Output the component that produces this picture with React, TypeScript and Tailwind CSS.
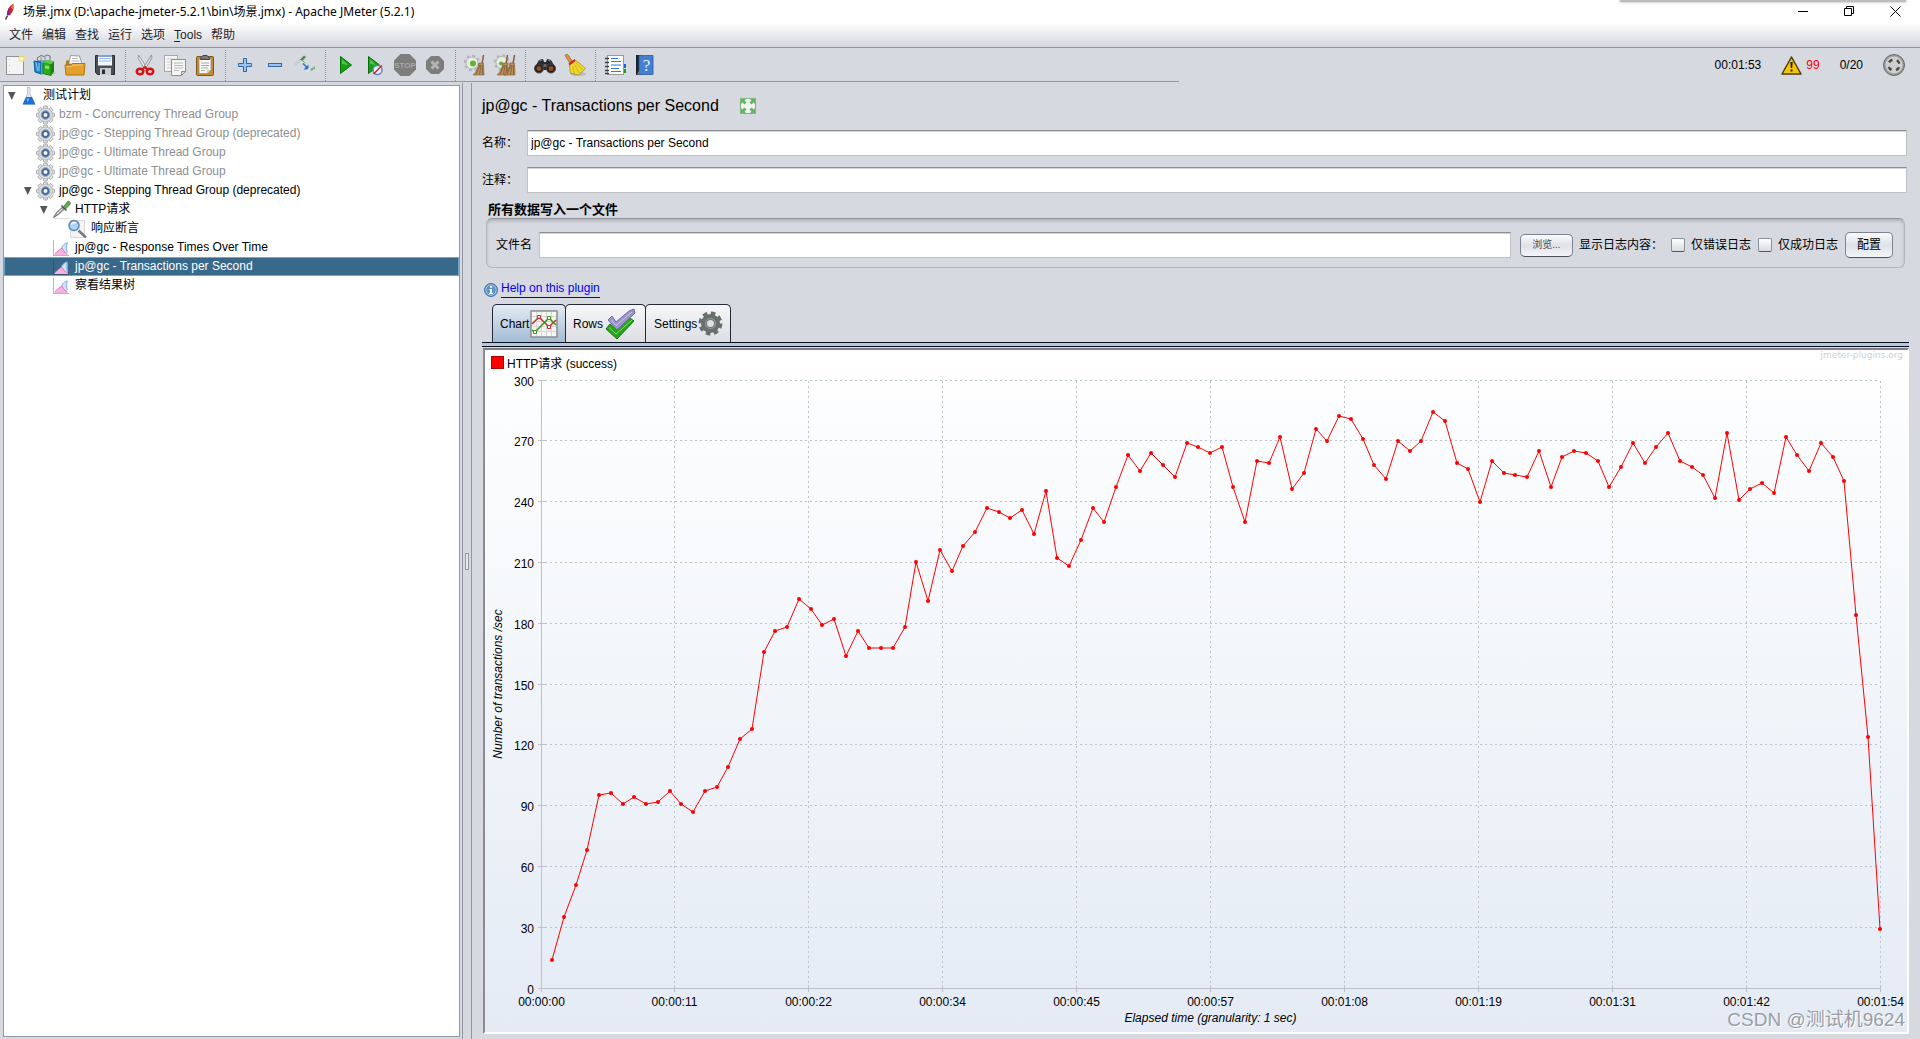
import { useLayoutEffect, useRef, useState } from 'react';
import type { ReactNode } from 'react';
import clsx from 'clsx';

/* ---------- toolbar icons (24x24) ---------- */

function Svg({ children, size = 24 }: { children: ReactNode; size?: number }) {
  return (
    <svg width={size} height={size} viewBox="0 0 24 24" fill="none" aria-hidden="true" className="block shrink-0">
      {children}
    </svg>
  );
}

const NewIcon = () => (
  <Svg>
    <rect x="3.500" y="3.500" width="17" height="18" fill="#f4f4f4" stroke="#8f9290" />
    <path d="M6.500 6v13" stroke="#c3c3c3" strokeDasharray="1 5" />
    <circle cx="19" cy="5.500" r="3.500" fill="#f6e27a" opacity=".8" />
    <circle cx="19" cy="5.500" r="1.500" fill="#fffbe0" />
  </Svg>
);

const TemplatesIcon = () => (
  <Svg>
    <path d="M4 5l4-2.500 3 1 3-1.500 3 1v5H5z" fill="#d7dadd" stroke="#6f7679" />
    <path d="M8 4v5M12 3.500v5" stroke="#8a9194" />
    <path d="M1 8l7 1v12l-6-2z" fill="#1b87c9" stroke="#0f6095" />
    <path d="M3 9.500l1.500 8M6 10v8" stroke="#8fd0f2" />
    <path d="M8 9l4-2v13l-4 2z" fill="#3ba5df" />
    <path d="M10 10l8 1v11.500l-8-2z" fill="#2fae1b" stroke="#1c7c0d" />
    <path d="M18 11l3-3v11l-3 3.500z" fill="#17850b" />
    <path d="M12 12.500l4 .5v3l-4-.5z" fill="#8be077" />
    <path d="M10 10l4-3 7 1-3 3z" fill="#59cc42" />
    <path d="M21 20l3-1-4 3z" fill="#999" opacity=".6" />
  </Svg>
);

const OpenIcon = () => (
  <Svg>
    <path d="M3 10V7.500h5L10 10h11v11H3z" fill="#b2781a" />
    <path d="M6 10l1.500-7.500 9 .5 2.500 8H6z" fill="#fafafa" stroke="#9a9a9a" />
    <path d="M9 5.500h6M8.500 8h8" stroke="#b5b5b5" />
    <path d="M2 12h6l1.500-1.500H22L21 22H3z" fill="#e2a02c" stroke="#b0740f" />
    <path d="M3.500 13.500h5l1.500-1.500h10" stroke="#f4c872" />
  </Svg>
);

const SaveIcon = () => (
  <Svg>
    <path d="M2.500 2.500h19v19h-17l-2-2z" fill="#4a4d52" stroke="#2a2b2e" />
    <rect x="5" y="2.500" width="14" height="10" fill="#f3f6fa" />
    <path d="M6 5.500h12M6 8h12" stroke="#9db9d8" />
    <path d="M5 3h14" stroke="#7da5d0" strokeWidth="2" />
    <rect x="7" y="15" width="11" height="7" fill="#c9cbce" />
    <rect x="9" y="16.500" width="3" height="4.500" fill="#2c2d30" />
  </Svg>
);

const CutIcon = () => (
  <Svg>
    <path d="M5.500 2L15 16.500l-2.500 1L5 5z" fill="#eceeee" stroke="#7f8486" strokeWidth=".8" />
    <path d="M18.500 2L9 16.500l2.500 1L19 5z" fill="#dde0e0" stroke="#7f8486" strokeWidth=".8" />
    <ellipse cx="7" cy="18.500" rx="3.200" ry="2.800" stroke="#d21414" strokeWidth="2.600" />
    <ellipse cx="17" cy="18.500" rx="3.200" ry="2.800" stroke="#d21414" strokeWidth="2.600" />
    <path d="M9 16.500l3-2.500 3 2.500" stroke="#d21414" strokeWidth="2" />
  </Svg>
);

const CopyIcon = () => (
  <Svg>
    <rect x="1.500" y="2.500" width="13" height="16" fill="#f4f4f4" stroke="#a5a7a8" />
    <path d="M4 6h8M4 9h4M4 12h4M4 15h4" stroke="#cdcdcd" />
    <path d="M8.500 6.500h14v12l-4 4h-10z" fill="#f6f6f6" stroke="#8c8f90" />
    <path d="M11 10h9M11 12.500h9M11 15h9M11 17.500h5" stroke="#b9b9b9" />
    <path d="M22.500 18.500h-4v4z" fill="#ddd" stroke="#8c8f90" />
  </Svg>
);

const PasteIcon = () => (
  <Svg>
    <rect x="3.500" y="3.500" width="17" height="19" rx="1" fill="#c48a2b" stroke="#83560f" />
    <path d="M6 5.500h12v11l-4 4H6z" fill="#fafafa" stroke="#8d8d8d" strokeWidth=".8" />
    <path d="M8 10h8M8 12.500h8M8 15h7M8 17.500h4" stroke="#a9a9a9" />
    <path d="M18 16.500h-4v4z" fill="#cfcfcf" />
    <path d="M7.500 6.500c0-3 2-3 2.500-4h4c.5 1 2.500 1 2.500 4z" fill="#77797a" stroke="#444" />
  </Svg>
);

const PlusIcon = () => (
  <Svg>
    <path d="M10.500 5.500h3v5h5v3h-5v5h-3v-5h-5v-3h5z" fill="#9dc3ee" stroke="#3465a4" />
  </Svg>
);

const MinusIcon = () => (
  <Svg>
    <rect x="5.500" y="10.500" width="13" height="3" fill="#9dc3ee" stroke="#3465a4" />
  </Svg>
);

const ToggleIcon = () => (
  <Svg>
    <path d="M2 12l6-6" stroke="#c9cdd0" strokeWidth="2.500" />
    <path d="M7 6.500l4-4 2 1.500-3.500 4z" fill="#4f8f4a" />
    <path d="M10 8l2 2" stroke="#8aa389" />
    <path d="M10 10.500l4 4" stroke="#2b6fd0" strokeWidth="1.500" />
    <path d="M15.500 16.500v-5l-5 5z" fill="#2b6fd0" />
    <path d="M13 19l4-3" stroke="#dfe3e6" strokeWidth="2.500" />
    <path d="M17 16.500l5-3.500v3l-4 2z" fill="#7bb376" />
  </Svg>
);

const PlayIcon = () => (
  <Svg>
    <path d="M7.500 3.500v17l11-8.500z" fill="#15a015" stroke="#0a6f0a" />
    <path d="M9 6v5l6 1z" fill="#67d467" opacity=".7" />
  </Svg>
);

const PlayNoTimersIcon = () => (
  <Svg>
    <path d="M5.500 3.500v17l11-8.500z" fill="#15a015" stroke="#0a6f0a" />
    <path d="M7 6v5l6 1z" fill="#67d467" opacity=".7" />
    <circle cx="14.500" cy="17" r="4.500" fill="#e7eefa" stroke="#5b86c4" strokeWidth="1.500" />
    <path d="M10.500 21l8.500-8.500" stroke="#d62020" strokeWidth="1.500" />
  </Svg>
);

const StopIcon = () => (
  <Svg>
    <path d="M7.500 1h9L23 7.500v9L16.500 23h-9L1 16.500v-9z" fill="#7d7d7d" />
    <text x="12" y="15" textAnchor="middle" fontSize="8" fontWeight="700" fill="#a6a6a6" fontFamily="Liberation Sans">STOP</text>
  </Svg>
);

const ShutdownIcon = () => (
  <Svg>
    <path d="M8 3h8l5 5v8l-5 5H8l-5-5V8z" fill="#7d7d7d" />
    <path d="M8.500 8.500l7 7M15.500 8.500l-7 7" stroke="#b4b4b4" strokeWidth="3" />
  </Svg>
);

const Cog = ({ cx, cy }: { cx: number; cy: number }) => (
  <g>
    <circle cx={cx} cy={cy} r="7" stroke="#b4b7b6" strokeWidth="2.500" strokeDasharray="2.800 2.700" />
    <circle cx={cx} cy={cy} r="6" fill="#e9ebea" stroke="#b4b7b6" />
  </g>
);

const Broom = ({ x }: { x: number }) => (
  <g transform={`translate(${x} 0)`}>
    <path d="M14.500 2L13 11" stroke="#8a5a2a" strokeWidth="1.500" />
    <path d="M10 10h4.500l.5 12H4c3.500-3 5-7 6-12z" fill="#b98f5d" stroke="#7d5a30" strokeWidth=".6" />
    <path d="M11 12l-4 9M12 12l-1.500 9.500M13.500 12v9.500" stroke="#7d5a30" strokeWidth=".8" />
  </g>
);

const ClearIcon = () => (
  <Svg>
    <Cog cx={9} cy={10} />
    <circle cx="10" cy="10.500" r="3" fill="#5cb82a" />
    <Broom x={6} />
  </Svg>
);

const ClearAllIcon = () => (
  <Svg>
    <Cog cx={9} cy={9.5} />
    <circle cx="8" cy="10.500" r="2" fill="#5cb82a" />
    <Broom x={0} />
    <Broom x={7} />
  </Svg>
);

const SearchIcon = () => (
  <Svg>
    <path d="M2 14l4-7 4-1 1 3h2l1-3 4 1 4 7v3H2z" fill="#2b2b2d" />
    <path d="M6.500 8l2-.5M15.500 7.500l2 .5" stroke="#9a9a9a" />
    <circle cx="6" cy="15.500" r="4.500" fill="#1f1f20" stroke="#4b4b4b" />
    <circle cx="18" cy="15.500" r="4.500" fill="#1f1f20" stroke="#4b4b4b" />
    <circle cx="6" cy="15.500" r="2.500" fill="#8d4e22" />
    <circle cx="18" cy="15.500" r="2.500" fill="#8d4e22" />
    <path d="M10.500 11h3v3h-3z" fill="#666" />
  </Svg>
);

const BroomIcon = () => (
  <Svg>
    <ellipse cx="15" cy="21" rx="8" ry="2" fill="#999" opacity=".5" />
    <path d="M2 2.500c1-1.500 3-1 3.500 0L9 8 6.500 9.500z" fill="#d79a3d" stroke="#93631b" strokeWidth=".8" />
    <path d="M6.500 10.500l5-3.500c4 2 7 5 11 8.500l-7 6.500-8-2c-.5-3-1-6-1-9.500z" fill="#f0da2e" stroke="#a88f10" strokeWidth=".8" />
    <path d="M9.500 13l2 7.500M11.500 11.500l5 9M13 10l7 7.500" stroke="#bda51b" strokeWidth=".8" />
    <path d="M5.500 10.500l6-4.500 1 2-6 4.500z" fill="#d62020" />
  </Svg>
);

const FunctionIcon = () => (
  <Svg>
    <rect x="4.500" y="2.500" width="16" height="19" fill="#fff" stroke="#9a9a9a" />
    <path d="M8 5.500h7M8 8.500h10M8 12h10M8 15.500h8M8 18.500h10" stroke="#2f7bdc" strokeWidth="1.200" />
    <path d="M2 5.500h4M2 9.500h4M2 13.500h4M2 17.500h4M2 20.500h4" stroke="#3a3a3a" strokeWidth="1.500" />
    <path d="M21 11h2v4h-2z" fill="#1767d0" />
    <path d="M21 16h2v4h-2z" fill="#17a01a" />
  </Svg>
);

const HelpIcon = () => (
  <Svg>
    <rect x="3" y="2" width="5" height="20" fill="#1f2023" />
    <path d="M6 2.500h14v19H6z" fill="#4480d2" stroke="#285a9f" strokeWidth=".8" />
    <path d="M3.500 21.500L7 17v4.500z" fill="#777" />
    <text x="13.500" y="18" textAnchor="middle" fontSize="17" fill="#e8f1ff" fontFamily="Liberation Serif">?</text>
  </Svg>
);

/* ---------- tree icons ---------- */

const FlaskIcon = () => (
  <svg width="20" height="20" viewBox="0 0 20 20" fill="none" aria-hidden="true">
    <path d="M7 1.500h3M7.500 2v6L3.500 18h11L10 8V2" fill="#e6edf6" stroke="#b4bfcc" />
    <path d="M6 11h6l3.500 7.500h-13z" fill="#1c6fd6" />
    <path d="M6.500 12.500h3l-2 4z" fill="#78b4f5" />
  </svg>
);

const GearIcon = () => (
  <svg width="20" height="20" viewBox="0 0 20 20" fill="none" aria-hidden="true">
    {[0, 45, 90, 135].map((angle) => (
      <rect key={angle} x="7.500" y="1" width="4" height="18" rx="1" fill="#e0e2e1" stroke="#9b9e9d" strokeWidth=".8" transform={`rotate(${angle} 9.500 10)`} />
    ))}
    <circle cx="9.500" cy="10" r="6.800" fill="#dfe1e0" stroke="#b0b3b2" strokeWidth=".8" />
    <circle cx="9.500" cy="10" r="4.300" fill="#46689c" stroke="#8ba0bf" />
    <circle cx="9.500" cy="10" r="2" fill="#f4f7fb" />
  </svg>
);

const DropperIcon = () => (
  <svg width="20" height="20" viewBox="0 0 20 20" fill="none" aria-hidden="true">
    <path d="M1.500 17.500l3-5 6-5.500 2 2-6 5.500z" fill="#a2a7ab" stroke="#5d6266" strokeWidth=".8" />
    <path d="M5 14l5-5" stroke="#f2f4f5" />
    <path d="M9.500 5.500l5 5" stroke="#4a4f4a" strokeWidth="1.500" />
    <path d="M11.500 7l3.500-5c1.500-1.800 4.500 0 3 2.500L13.500 9z" fill="#6ba457" stroke="#437a34" strokeWidth=".8" />
    <path d="M2 18.500h15" stroke="#ddd" />
  </svg>
);

const MagnifierIcon = () => (
  <svg width="20" height="20" viewBox="0 0 20 20" fill="none" aria-hidden="true">
    <rect x="2.500" y="1.500" width="14" height="17" fill="#f4f4f4" stroke="#d8d8d8" />
    <path d="M10.500 11.500l7.500 7" stroke="#77797b" strokeWidth="2.500" />
    <circle cx="6" cy="6.500" r="5" fill="#a8d4f5" stroke="#5c86b2" strokeWidth="1.500" />
    <path d="M3.500 5.500c1-2 3-2.500 4.500-1.500" stroke="#fff" strokeWidth="1.500" />
  </svg>
);

const GraphIcon = ({ axis = '#b4b7bc' }: { axis?: string }) => (
  <svg width="20" height="20" viewBox="0 0 20 20" fill="none" aria-hidden="true">
    <path d="M1.500 2v16M1 17.500h16" stroke={axis} />
    <path d="M9 10c2-3 3.500-5 6.500-5v12H9z" fill="#d3e3fa" />
    <path d="M9.500 10c1.500-3 3-5 6-5-2 3-1.500 6 0 9" stroke="#7b9fdc" strokeWidth=".8" />
    <path d="M2.500 17v-1L7 12l3-2 2 3.500 3.500 2.500v1z" fill="#f3b5de" />
    <path d="M3 15.500L7 12l3-2 2 3.500 3 2" stroke="#d569b4" strokeWidth=".8" />
  </svg>
);

/* ---------- window ---------- */

function Feather() {
  return (
    <svg width="14" height="18" viewBox="0 0 14 18" aria-hidden="true" className="shrink-0">
      <path d="M3 12c0-5 2-9 6-11 1.500 4 0 8-3.500 11.500z" fill="#c8203f" />
      <path d="M6.500 4c1-2 2-2.500 3-3.500.5 2 .3 4-.5 6z" fill="#e8772e" />
      <path d="M3 12c0-3 1-5 2-7L5 12z" fill="#7b2178" />
      <path d="M1.500 16.500l2-4" stroke="#5c2a4e" strokeWidth="1.500" />
    </svg>
  );
}

function TitleBar() {
  return (
    <header className="relative flex h-[23px] shrink-0 items-center bg-white pl-1">
      <Feather />
      <h1 className="ml-[5px] flex-1 font-['Noto_Sans','Noto_Sans_CJK_SC',sans-serif] text-[12px] leading-4">
        场景.jmx (D:\apache-jmeter-5.2.1\bin\场景.jmx) - Apache JMeter (5.2.1)
      </h1>
      <div className="absolute top-0 right-[14px] h-[2px] w-[286px] bg-[#bdbdbd] shadow-[0_0_3px_#999]" />
      <button type="button" aria-label="最小化" className="flex h-[20px] w-[46px] items-center justify-center">
        <svg width="11" height="11"><path d="M0 5.500h10" stroke="#000" /></svg>
      </button>
      <button type="button" aria-label="还原" className="flex h-[20px] w-[46px] items-center justify-center">
        <svg width="11" height="11" fill="none"><path d="M.5 2.500h7v7h-7zM2.500 2.500v-2h7v7h-2" stroke="#000" /></svg>
      </button>
      <button type="button" aria-label="关闭" className="mr-[2px] flex h-[20px] w-[46px] items-center justify-center">
        <svg width="11" height="11"><path d="M.5.5l10 10M10.500.5l-10 10" stroke="#000" /></svg>
      </button>
    </header>
  );
}

function MenuBar() {
  return (
    <nav className="flex h-[25px] shrink-0 items-center gap-[9px] border-b border-[#9297a1] bg-linear-to-b from-white to-[#d3d6dd] pl-[9px] text-[12px] text-[#23232a]">
      <button type="button">文件</button>
      <button type="button">编辑</button>
      <button type="button">查找</button>
      <button type="button">运行</button>
      <button type="button">选项</button>
      <button type="button"><span className="underline underline-offset-2">T</span>ools</button>
      <button type="button">帮助</button>
    </nav>
  );
}

const toolGroups = [
  [
    { label: '新建', icon: <NewIcon /> },
    { label: '模板', icon: <TemplatesIcon /> },
    { label: '打开', icon: <OpenIcon /> },
    { label: '保存', icon: <SaveIcon /> },
  ],
  [
    { label: '剪切', icon: <CutIcon /> },
    { label: '复制', icon: <CopyIcon /> },
    { label: '粘贴', icon: <PasteIcon /> },
  ],
  [
    { label: '展开', icon: <PlusIcon /> },
    { label: '折叠', icon: <MinusIcon /> },
    { label: '切换', icon: <ToggleIcon /> },
  ],
  [
    { label: '启动', icon: <PlayIcon /> },
    { label: '不停顿启动', icon: <PlayNoTimersIcon /> },
    { label: '停止', icon: <StopIcon /> },
    { label: '关闭线程', icon: <ShutdownIcon /> },
  ],
  [
    { label: '清除', icon: <ClearIcon /> },
    { label: '清除全部', icon: <ClearAllIcon /> },
  ],
  [
    { label: '搜索', icon: <SearchIcon /> },
    { label: '重置搜索', icon: <BroomIcon /> },
  ],
  [
    { label: '函数助手', icon: <FunctionIcon /> },
    { label: '帮助', icon: <HelpIcon /> },
  ],
];

function Toolbar() {
  return (
    <div className="flex h-[34px] shrink-0">
      <div className="flex w-[1179px] border-b border-[#9297a1]">
        {toolGroups.map((group, i) => (
          <div key={i} className="flex">
            {i > 0 && <div className="mt-[2px] ml-[5px] w-[5px] border-l border-dotted border-[#8b8f99]" />}
            {group.map((tool) => (
              <button key={tool.label} type="button" aria-label={tool.label} className="flex w-[30px] items-center justify-center">
                {tool.icon}
              </button>
            ))}
          </div>
        ))}
      </div>
      <div className="flex flex-1 items-center justify-end pr-[14px] text-[12px]">
        <span>00:01:53</span>
        <button type="button" aria-label="日志" className="ml-5 flex items-center gap-1 text-[#ff0000]">
          <svg width="21" height="19" viewBox="0 0 21 19" aria-hidden="true">
            <path d="M10.500 1l9.500 17H1z" fill="#f7c600" stroke="#4b3d05" strokeWidth="1.500" strokeLinejoin="round" />
            <path d="M9.300 6h2.400l-.5 6h-1.400zM9.500 13.500h2v2h-2z" fill="#222" />
          </svg>
          99
        </button>
        <span className="ml-5">0/20</span>
        <svg width="24" height="24" viewBox="0 0 24 24" fill="none" aria-hidden="true" className="ml-[19px]">
          <circle cx="12" cy="12" r="10.500" fill="#9b9b9b" stroke="#6a6a6a" />
          <circle cx="12" cy="12" r="8.500" fill="#cfcfcf" />
          <circle cx="12" cy="12" r="5.500" stroke="#4a4a4a" strokeWidth="2.500" strokeDasharray="4 4.640" strokeDashoffset="-2.320" />
        </svg>
      </div>
    </div>
  );
}

const nodes = [
  { text: '测试计划', icon: <FlaskIcon />, pad: 'pl-1', open: true },
  { text: 'bzm - Concurrency Thread Group', icon: <GearIcon />, pad: 'pl-5', disabled: true },
  { text: 'jp@gc - Stepping Thread Group (deprecated)', icon: <GearIcon />, pad: 'pl-5', disabled: true },
  { text: 'jp@gc - Ultimate Thread Group', icon: <GearIcon />, pad: 'pl-5', disabled: true },
  { text: 'jp@gc - Ultimate Thread Group', icon: <GearIcon />, pad: 'pl-5', disabled: true },
  { text: 'jp@gc - Stepping Thread Group (deprecated)', icon: <GearIcon />, pad: 'pl-5', open: true },
  { text: 'HTTP请求', icon: <DropperIcon />, pad: 'pl-9', open: true },
  { text: '响应断言', icon: <MagnifierIcon />, pad: 'pl-13' },
  { text: 'jp@gc - Response Times Over Time', icon: <GraphIcon />, pad: 'pl-9' },
  { text: 'jp@gc - Transactions per Second', icon: <GraphIcon axis="#35556e" />, pad: 'pl-9', selected: true },
  { text: '察看结果树', icon: <GraphIcon />, pad: 'pl-9' },
];

function Tree() {
  return (
    <ul role="tree" className="mt-[3px] mb-[2px] ml-[3px] w-[457px] shrink-0 border border-[#9297a1] bg-white text-[12px]">
      {nodes.map((node, i) => (
        <li
          key={i}
          role="treeitem"
          aria-selected={!!node.selected}
          className={clsx(
            'flex h-[19px] items-center whitespace-nowrap',
            node.pad,
            node.disabled && 'text-[#8e8f91]',
            node.selected && 'bg-[#39698a] text-white outline outline-[#73a4d1] -outline-offset-1',
          )}
        >
          <span className="w-3 shrink-0">
            {node.open && <svg width="8" height="8"><path d="M0 0h7.500L3.750 8z" fill="#55565b" /></svg>}
          </span>
          <span className="mr-[3px] w-5 shrink-0">{node.icon}</span>
          <span className="pb-px leading-4">{node.text}</span>
        </li>
      ))}
    </ul>
  );
}

/* ---------- form ---------- */

const field =
  'h-[26px] min-w-0 flex-1 border border-[#c0c1c4] border-t-[#8d8e92] bg-white px-[3px] shadow-[inset_0_1px_0_#d4d4d6] outline-none';
const nimbusButton =
  'rounded-[5px] border border-[#7e838d] border-b-[#4c5058] bg-linear-to-b from-[#fbfbfc] via-[#dfe2e6] to-[#f4f5f8] text-center';
const checkbox =
  'size-[14px] appearance-none rounded-[2px] border border-[#8b9099] border-b-[#50555f] bg-linear-to-b from-white to-[#d9dbe2]';

function HeaderForm() {
  return (
    <form className="text-[12px] leading-4">
      <div className="flex h-12 items-center gap-[21px]">
        <h2 className="text-[16px] leading-5">jp@gc - Transactions per Second</h2>
        <button type="button" aria-label="展开面板">
          <svg width="16" height="16" viewBox="0 0 16 16" fill="none" className="block">
            <rect x=".5" y=".5" width="15" height="15" fill="#f1f4f1" stroke="#7fb57f" />
            <path d="M1 1h5L4.500 2.500 6.500 4.500l-2 2L2.500 4.500 1 6zM15 1h-5l1.500 1.500-2 2 2 2 2-2L15 6zM1 15h5l-1.500-1.500 2-2-2-2-2 2L1 10zM15 15h-5l1.500-1.500-2-2 2-2 2 2L15 10z" fill="#63b563" />
          </svg>
        </button>
      </div>
      <div className="mr-[2px] flex items-center">
        <label htmlFor="name" className="w-[45px]">名称：</label>
        <input id="name" type="text" defaultValue="jp@gc - Transactions per Second" className={field} />
      </div>
      <div className="mt-[11px] mr-[2px] flex items-center">
        <label htmlFor="comment" className="w-[45px]">注释：</label>
        <input id="comment" type="text" className={field} />
      </div>
      <fieldset className="mt-[9px] mr-1 ml-1">
        <legend className="ml-[2px] text-[13px] leading-4 font-bold">所有数据写入一个文件</legend>
        <div className="flex h-[50px] items-center rounded-[6px] border border-[#b4b6bc] border-t-[#8f9299] pt-1 pr-[11px] pl-[9px] shadow-[inset_0_2px_3px_#b0b3ba]">
          <label htmlFor="file" className="w-[43px]">文件名</label>
          <input id="file" type="text" className={field} />
          <button type="button" className={clsx(nimbusButton, 'ml-[9px] h-[23px] w-[53px] text-[10px] text-[#4a4a4e]')}>浏览...</button>
          <span className="ml-[6px] w-[92px] whitespace-nowrap">显示日志内容：</span>
          <label className="flex items-center gap-[6px] whitespace-nowrap">
            <input type="checkbox" className={checkbox} />
            仅错误日志
          </label>
          <label className="ml-[7px] flex items-center gap-[6px] whitespace-nowrap">
            <input type="checkbox" className={checkbox} />
            仅成功日志
          </label>
          <button type="button" className={clsx(nimbusButton, 'ml-[7px] h-[26px] w-[48px]')}>配置</button>
        </div>
      </fieldset>
    </form>
  );
}

const tab = 'flex h-[38px] items-center rounded-t-[5px] border border-b-0 border-[#23283a]';

function Tabs() {
  return (
    <div>
      <div className="mt-[14px] flex h-4 items-start pl-[2px]">
        <svg width="14" height="14" viewBox="0 0 14 14" fill="none" aria-hidden="true" className="mt-px shrink-0">
          <circle cx="7" cy="7" r="6.500" fill="#5f93cc" stroke="#41709f" />
          <circle cx="7" cy="7" r="5.200" stroke="#a8c8ea" />
          <path d="M6 3h2v1.700H6zM5.500 6H8v4h1v1H5.200v-1H6V7h-.5z" fill="#fff" />
        </svg>
        <a href="#help" className="ml-[3px] h-4 border-b border-[#0000ff] text-[12px] leading-3 text-[#0000ff]">Help on this plugin</a>
      </div>
      <div role="tablist" className="mt-[6px] flex pl-[10px] text-[12px]">
        <button type="button" role="tab" aria-selected="true" className={clsx(tab, 'w-[74px] bg-linear-to-b from-[#e4ebf3] to-[#a3bcd4] pl-[7px]')}>
          Chart
          <svg width="28" height="28" viewBox="0 0 28 28" fill="none" aria-hidden="true" className="ml-px">
            <rect x="1" y="1" width="26" height="26" fill="#f6f6f4" stroke="#8d8d8d" strokeWidth="1.500" />
            <path d="M6.500 2v24M11.500 2v24M16.500 2v24M21.500 2v24M2 6.500h24M2 11.500h24M2 16.500h24M2 21.500h24" stroke="#d5d5d2" />
            <path d="M2 14l7-7 10 10 7-7" stroke="#d02a2a" strokeWidth="1.500" />
            <path d="M2 20l3 2L19 8l7 7" stroke="#3f8f1c" strokeWidth="1.500" />
            <path d="M7.500 5.500h3v3h-3zM17.500 15.500h3v3h-3z" fill="#fff" stroke="#d02a2a" />
            <path d="M3.500 20.500h3v3h-3zM17.500 6.500h3v3h-3z" fill="#fff" stroke="#3f8f1c" />
          </svg>
        </button>
        <button type="button" role="tab" aria-selected="false" className={clsx(tab, '-ml-px w-[81px] bg-linear-to-b from-[#f7f7f9] to-[#dcdee3] pl-[7px]')}>
          Rows
          <svg width="32" height="32" viewBox="0 0 32 32" fill="none" aria-hidden="true" className="ml-px">
            <path d="M2 21l4-5 6 5L26 10l4 3-17 18z" fill="#27a41c" stroke="#167a0d" />
            <path d="M5 19.500l7 6.500 16-14" stroke="#7fdc6a" />
            <path d="M4 12l4-4 4 6L25 3l5-2 1 4-18 17z" fill="#9a94c8" stroke="#726ba6" />
            <path d="M7 11.500l5 6L28 4" stroke="#c8c4e6" />
          </svg>
        </button>
        <button type="button" role="tab" aria-selected="false" className={clsx(tab, '-ml-px w-[86px] bg-linear-to-b from-[#f7f7f9] to-[#dcdee3] pl-2')}>
          Settings
          <svg width="25" height="25" viewBox="0 0 25 25" fill="none" aria-hidden="true" className="ml-px">
            <circle cx="12.500" cy="12.500" r="10" stroke="#68706f" strokeWidth="4" strokeDasharray="4.500 3.350" />
            <circle cx="12.500" cy="12.500" r="6.500" fill="#dfe1e3" stroke="#68706f" strokeWidth="6" />
            <circle cx="12.500" cy="12.500" r="5" stroke="#8b9291" strokeWidth="1.500" />
          </svg>
        </button>
      </div>
      <div className="h-[5px] border-y border-[#0b0f1e] bg-[#b3cade]" />
    </div>
  );
}

/* ---------- chart ---------- */

// one sample per second, starting at 00:00:01
const samples = [
  14, 35, 51, 68, 95, 96, 91, 94, 91, 92, 97, 91, 87, 97, 99, 109, 123, 128, 166, 176,
  178, 192, 187, 179, 182, 164, 176, 168, 168, 168, 178, 210, 191, 216, 206, 218, 225, 237, 235, 232,
  236, 224, 245, 212, 208, 221, 237, 230, 247, 263, 255, 264, 258, 252, 269, 267, 264, 267, 247, 230,
  260, 259, 272, 246, 254, 276, 270, 282, 281, 271, 258, 251, 270, 265, 270, 284, 280, 259, 256, 240,
  260, 254, 253, 252, 265, 247, 262, 265, 264, 260, 247, 257, 269, 259, 267, 274, 260, 257, 253, 242,
  274, 241, 246, 249, 244, 272, 263, 255, 269, 262, 250, 184, 124, 29,
];
const timeLabels = [
  '00:00:00', '00:00:11', '00:00:22', '00:00:34', '00:00:45', '00:00:57',
  '00:01:08', '00:01:19', '00:01:31', '00:01:42', '00:01:54',
];
const valueLabels = [0, 30, 60, 90, 120, 150, 180, 210, 240, 270, 300];

function Chart() {
  const box = useRef<HTMLDivElement>(null);
  const [size, setSize] = useState({ w: 1422, h: 682 });

  useLayoutEffect(() => {
    const el = box.current;
    if (!el) return;
    const measure = () => setSize({ w: el.clientWidth, h: el.clientHeight });
    measure();
    const observer = new ResizeObserver(measure);
    observer.observe(el);
    return () => observer.disconnect();
  }, []);

  const left = 56;
  const right = size.w - 27;
  const top = 30;
  const bottom = size.h - 44;
  const px = (t: number) => left + ((right - left) * t) / samples.length;
  const py = (v: number) => bottom - ((bottom - top) * v) / 300;
  const points = samples.map((v, i) => [Math.floor(px(i + 1)), Math.round(py(v))]);

  return (
    <div ref={box} className="relative mt-px ml-px min-h-0 flex-1 overflow-hidden border-2 border-t-[#7d7f82] border-r-white border-b-white border-l-[#8a8c8f] bg-linear-to-b from-white to-[#e4ebf5]">
      <svg width={size.w} height={size.h} className="absolute inset-0 font-['Liberation_Sans','Noto_Sans_CJK_SC',sans-serif] text-[12px]" fill="none">
        <rect x="6.500" y="6.500" width="12" height="12" fill="#ff0000" stroke="#b20000" />
        <text x="22" y="18" fill="#000">HTTP请求 (success)</text>
        <text x={size.w - 4} y="8" textAnchor="end" fill="#cdd1d8" className="font-['DejaVu_Sans',sans-serif] text-[9px]">jmeter-plugins.org</text>

        {valueLabels.map((v) => {
          const y = Math.floor(py(v)) + 0.5;
          return (
            <g key={v}>
              <path d={`M${left - 3} ${y}H${left + 4}`} stroke="#bcc1cc" />
              {v > 0 && <path d={`M${left + 4} ${y}H${right}`} stroke="#bcc1cc" strokeDasharray="2 3" />}
              <text x={left - 7} y={y + 5} textAnchor="end" fill="#000">{v}</text>
            </g>
          );
        })}
        {timeLabels.map((label, i) => {
          const x = Math.floor(left + ((right - left) * i) / 10) + 0.5;
          return (
            <g key={label}>
              {i > 0 && <path d={`M${x} ${bottom}V${top}`} stroke="#bcc1cc" strokeDasharray="2 3" />}
              <path d={`M${x} ${bottom - 3}v7`} stroke="#bcc1cc" />
              <text x={x} y={bottom + 18} textAnchor="middle" fill="#000">{label}</text>
            </g>
          );
        })}
        <path d={`M${left + 0.5} ${top}V${bottom + 0.5}H${right}`} stroke="#bcc1cc" />

        <text x={(left + right) / 2} y={size.h - 10} textAnchor="middle" fill="#000" fontStyle="italic">Elapsed time (granularity: 1 sec)</text>
        <text transform={`translate(17 ${(top + bottom) / 2}) rotate(-90)`} textAnchor="middle" fill="#000" fontStyle="italic">Number of transactions /sec</text>

        <polyline points={points.map((p) => p.join(',')).join(' ')} stroke="#ff0000" />
        {points.map(([x, y], i) => (
          <circle key={i} cx={x} cy={y} r="2" fill="#ff0000" />
        ))}
      </svg>
      <span className="absolute right-[2px] bottom-0 font-['Liberation_Sans','Noto_Sans_CJK_SC',sans-serif] text-[19px] leading-6 whitespace-nowrap text-[#9a9da3] [text-shadow:1px_1px_0_#fff]">
        CSDN @测试机9624
      </span>
    </div>
  );
}

export default function App() {
  return (
    <div className="flex h-screen flex-col overflow-hidden bg-[#d6d9df] font-['Liberation_Sans','Noto_Sans_CJK_SC',sans-serif] text-black">
      <TitleBar />
      <MenuBar />
      <Toolbar />
      <div className="flex min-h-0 flex-1">
        <Tree />
        <div className="mt-px ml-[2px] flex w-[10px] shrink-0 items-center justify-center border-x border-[#9297a1]">
          <div className="h-[17px] w-1 border border-[#9297a1] bg-[#e6e8ec]" />
        </div>
        <main className="flex min-w-0 flex-1 flex-col pr-[11px] pb-[5px] pl-[10px]">
          <HeaderForm />
          <Tabs />
          <Chart />
        </main>
      </div>
    </div>
  );
}
